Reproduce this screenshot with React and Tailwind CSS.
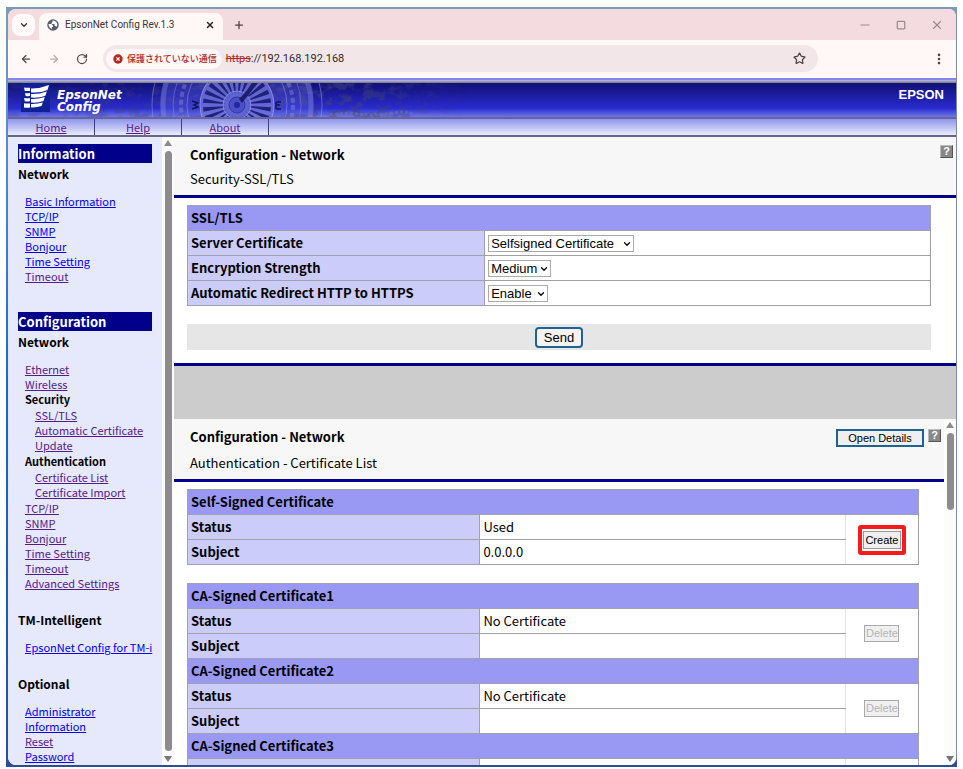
import { ArrowLeft, ArrowRight, ChevronDown, EllipsisVertical, Minus, Plus, RotateCw, Square, Star, X } from 'lucide-react';

const informationLinks = [
  { label: 'Basic Information' },
  { label: 'TCP/IP' },
  { label: 'SNMP' },
  { label: 'Bonjour' },
  { label: 'Time Setting' },
  { label: 'Timeout', visited: true },
];

const configurationLinks = [
  { label: 'Ethernet', visited: true },
  { label: 'Wireless', visited: true },
  {
    label: 'Security',
    children: [
      { label: 'SSL/TLS', visited: true },
      { label: 'Automatic Certificate Update', visited: true },
    ],
  },
  {
    label: 'Authentication',
    children: [
      { label: 'Certificate List', visited: true },
      { label: 'Certificate Import', visited: true },
    ],
  },
  { label: 'TCP/IP', visited: true },
  { label: 'SNMP', visited: true },
  { label: 'Bonjour', visited: true },
  { label: 'Time Setting', visited: true },
  { label: 'Timeout', visited: true },
  { label: 'Advanced Settings', visited: true },
];

const intelligentLinks = [{ label: 'EpsonNet Config for TM-i', nowrap: true }];

const optionalLinks = [
  { label: 'Administrator Information' },
  { label: 'Reset', visited: true },
  { label: 'Password' },
];

const sslSettings = [
  { id: 'server-certificate', label: 'Server Certificate', value: 'Selfsigned Certificate', width: 'w-[146px]' },
  { id: 'encryption-strength', label: 'Encryption Strength', value: 'Medium', width: 'w-[63px]' },
  { id: 'https-redirect', label: 'Automatic Redirect HTTP to HTTPS', value: 'Enable', width: 'w-[60px]' },
];

const caCertificates = ['CA-Signed Certificate1', 'CA-Signed Certificate2', 'CA-Signed Certificate3'];

// === Browser chrome ===
const GlobeIcon = () => (
  <svg className="size-3 shrink-0" viewBox="0 0 24 24">
    <circle cx="12" cy="12" r="11.5" fill="#566069" />
    <path d="M3 10h6l3 3v3h-2v4C6 19 3 15 3 10z" fill="#fff8f6" />
    <path d="M11 3v3l-2 2v2h6v3l3 2h2c2-5 0-11-9-12z" fill="#fff8f6" />
  </svg>
);

const TabStrip = () => (
  <div className="flex h-[31px] shrink-0 items-end bg-[#f4dbdf] pl-1">
    <button className="mb-1 flex h-[22px] w-[23px] items-center justify-center rounded-lg bg-[#fffafa]" aria-label="Search tabs">
      <ChevronDown size={10} strokeWidth={3} color="#333" />
    </button>
    <div className="ml-1 flex h-[27px] w-[184px] items-center rounded-t-lg bg-[#fff8f6] pb-1 pl-2 pr-2">
      <GlobeIcon />
      <span className="ml-1.5 flex-1 whitespace-nowrap font-['Roboto',sans-serif] text-[10px] text-[#3c3436]">EpsonNet Config Rev.1.3</span>
      <button aria-label="Close tab"><X size={10} strokeWidth={3.5} color="#2b2325" /></button>
    </div>
    <button className="mb-[9px] ml-2.5" aria-label="New tab"><Plus size={12} strokeWidth={2.5} color="#4a4042" /></button>
    <div className="mb-2 ml-auto flex gap-[22px] pr-3 text-[#9c8b8e]">
      <button aria-label="Minimize"><Minus size={14} strokeWidth={2} /></button>
      <button aria-label="Maximize"><Square size={10} strokeWidth={3} className="mx-0.5" /></button>
      <button aria-label="Close"><X size={14} strokeWidth={2} /></button>
    </div>
  </div>
);

const Toolbar = () => (
  <div className="flex h-[37px] shrink-0 items-center bg-[#fff8f6] pl-3 pr-2.5">
    <button aria-label="Back"><ArrowLeft size={12} strokeWidth={2.5} color="#544446" /></button>
    <button className="ml-4" aria-label="Forward"><ArrowRight size={12} strokeWidth={2.5} color="#b5a9aa" /></button>
    <button className="ml-4" aria-label="Reload"><RotateCw size={12} strokeWidth={2.5} color="#544446" /></button>
    <div className="ml-[15px] flex h-[27px] flex-1 items-center rounded-full bg-[#f2e6e9] pl-[3px] pr-3">
      <button className="flex h-[20px] items-center gap-1 rounded-full bg-[#fff8f6] pl-[7px] pr-[5px]">
        <svg className="size-[10px]" viewBox="0 0 10 10">
          <circle cx="5" cy="5" r="4.7" fill="#b3261e" />
          <path d="M3.4 3.4l3.2 3.2M6.6 3.4L3.4 6.6" stroke="#fff" strokeWidth="1.3" />
        </svg>
        <span className="whitespace-nowrap text-[9px] font-medium leading-[20px] text-[#b3261e]">保護されていない通信</span>
      </button>
      <span className="ml-1 flex-1 font-['Roboto',sans-serif] text-[11px] leading-[20px] text-[#33292b]">
        <span className="text-[#b3261e] line-through">https</span>://192.168.192.168
      </span>
      <button aria-label="Bookmark"><Star size={13} strokeWidth={2.3} color="#544446" /></button>
    </div>
    <button className="ml-[114px]" aria-label="Menu"><EllipsisVertical size={14} strokeWidth={2.5} color="#544446" /></button>
  </div>
);

// === Printer banner ===
const CompassArt = () => (
  <svg className="absolute inset-y-0 left-0 h-full w-[460px]" viewBox="0 0 460 34" preserveAspectRatio="xMinYMin slice">
    <defs>
      <linearGradient id="mapFade" x1="0" x2="1">
        <stop offset="0.1" stopColor="#fff" stopOpacity="0.4" />
        <stop offset="0.75" stopColor="#fff" />
        <stop offset="1" stopColor="#fff" stopOpacity="0" />
      </linearGradient>
      <mask id="mapMask"><rect width="460" height="34" fill="url(#mapFade)" /></mask>
      <filter id="terrain" x="0" y="0" width="1" height="1">
        <feTurbulence type="fractalNoise" baseFrequency="0.09 0.13" numOctaves="4" seed="8" />
        <feColorMatrix values="0 0 0 0 0.05  0 0 0 0 0.05  0 0 0 0 0.22  5 0 0 0 -2.3" />
      </filter>
    </defs>
    <g mask="url(#mapMask)" opacity="0.6">
      <rect width="460" height="34" filter="url(#terrain)" />
    </g>
    <path d="M322 32q16-3 29-1t33-1 20 2" fill="none" stroke="#77758a" strokeWidth="3" strokeDasharray="3 2" opacity="0.5" />
    <circle cx="229" cy="22" r="77" fill="#5c62d8" opacity="0.35" />
    <g fill="none" stroke="#9a9eea">
      <circle cx="229" cy="22" r="85" strokeWidth="1" opacity="0.5" />
      <circle cx="229" cy="22" r="74" strokeWidth="5" opacity="0.3" />
      <circle cx="229" cy="22" r="64" opacity="0.4" />
      <circle cx="229" cy="22" r="56" strokeWidth="4" strokeDasharray="5 3" opacity="0.35" />
      <circle cx="229" cy="22" r="50" opacity="0.5" />
    </g>
    <circle cx="229" cy="22" r="37" fill="#7075dc" stroke="#a2a6ee" opacity="0.75" />
    <g fill="#14166a" opacity="0.85">
      {Array.from({ length: 24 }, (_, i) => (
        <path key={i} d="M228.6 11l-1.6-23h4.4l-2 23z" transform={`rotate(${i * 15 + 7} 229 22)`} />
      ))}
    </g>
    <circle cx="229" cy="22" r="14" fill="#6065d0" stroke="#8f94e6" opacity="0.8" />
    <circle cx="229" cy="22" r="8" fill="#4a4fc6" stroke="#3338a6" />
    <circle cx="229" cy="22" r="3" fill="#2226a0" />
    <path d="M231 16l15-16h4l-16 20z" fill="#1c1e72" />
    <path d="M184 18l6 2-4 2 4 2-6 2M268 19v7M268 19h5M268 22h4M268 26h5" fill="none" stroke="#12145e" strokeWidth="1.4" />
  </svg>
);

const Banner = () => (
  <header className="shrink-0">
    <div className="h-px bg-[#fff8f6]" />
    <div className="h-[2px] bg-[#8484f2]" />
    <div className="h-[3px] bg-linear-to-b from-[#c0c0d4] to-[#77779a]" />
    <div className="relative flex h-[34px] items-start justify-between overflow-hidden bg-linear-to-b from-[#101074] via-[#2b2bd2] via-75% to-[#7474e4]">
      <CompassArt />
      <div className="relative flex items-start">
        <svg className="ml-[13px] h-[29px] w-[29px]" viewBox="0 0 29 29">
          <rect width="29" height="29" fill="#102096" />
          <g fill="#fff">
            <path d="M3 4.5q3 .6 6 .2v3.2q-3 .4-5.200 0zM10 5.500q9 .2 18-3.500l-1.500 5q-7 3.200-16.500 2.400z" />
            <path d="M4 9.900q2.500.500 5 .200v3q-2.500.3-4.300 0zM10 11q8 .3 15.800-2.600l-1.400 4.400q-6.400 2.500-14.400 1.800z" />
            <path d="M3 15q3 .5 6 .2v3q-3 .4-5.200 0zM10 16q7 .3 13.800-2l-1.300 4q-5.500 2.200-12.500 1.600z" />
            <path d="M3 20.300q3 .5 6 .2v4q-3 .4-6 0zM10 21q6 .2 11.800-1.400l-1.200 3.400q-4.600 1.700-10.600 1.400z" />
          </g>
        </svg>
        <div className="ml-[7px] pt-[6px] font-['DejaVu_Sans',sans-serif] text-[12px] font-bold italic leading-[12px] text-white">
          EpsonNet<br />Config
        </div>
      </div>
      <span className="relative pr-3 pt-[3px] font-['Liberation_Sans',sans-serif] text-[13px] font-bold leading-[18px] text-white">EPSON</span>
    </div>
    <nav className="flex h-[20px] border-b-2 border-t-2 border-b-[#66668c] border-t-[#65659a] bg-linear-to-b from-[#9094ea] to-[#ececfb]">
      {['Home', 'Help', 'About'].map(item => (
        <a key={item} href="#" className="w-[87px] border-r border-[#40407c] text-center text-[11px] leading-[17px] text-[#551a8b] underline">
          {item}
        </a>
      ))}
    </nav>
  </header>
);

// === Frames ===
const ScrollBar = ({ short }) => (
  <div className="flex w-[12px] shrink-0 flex-col items-center bg-[#fcfcfc] pb-[3px] pt-[3px]">
    <svg className="h-[6px] w-[8px] shrink-0" viewBox="0 0 8 6"><path d="M4 0l4 6H0z" fill="#8c8c8c" /></svg>
    <div className={`my-[5px] w-[7px] rounded-full bg-[#8c8c8c] ${short ? 'h-[77px]' : 'flex-1'}`} />
    <svg className="mt-auto h-[6px] w-[8px] shrink-0" viewBox="0 0 8 6"><path d="M4 6L0 0h8z" fill="#777" /></svg>
  </div>
);

const LinkList = ({ items, nested }) => (
  <ul className={nested ? 'py-px pl-2.5' : 'mt-2.5 pl-[7px]'}>
    {items.map(item => (
      <li key={item.label} className={item.nowrap ? 'whitespace-nowrap' : undefined}>
        {item.children ? (
          <>
            <span className="font-bold">{item.label}</span>
            <LinkList items={item.children} nested />
          </>
        ) : (
          <a href="#" className={`underline ${item.visited ? 'text-[#551a8b]' : 'text-[#0000ee]'}`}>{item.label}</a>
        )}
      </li>
    ))}
  </ul>
);

const MenuTitle = ({ children }) => (
  <h2 className="mb-px bg-[#00008b] text-[13px] font-bold leading-[19px] text-white">{children}</h2>
);

const MenuHeading = ({ children }) => <h3 className="text-[12px] font-bold leading-[20px]">{children}</h3>;

const Sidebar = () => (
  <aside className="flex w-[166px] shrink-0 overflow-hidden">
    <div className="h-full flex-1 overflow-hidden bg-[#e6e8fb] pl-2.5 pr-2.5 pt-[7px] text-[11px] leading-[15px]">
      <MenuTitle>Information</MenuTitle>
      <MenuHeading>Network</MenuHeading>
      <LinkList items={informationLinks} />
      <div className="h-7" />
      <MenuTitle>Configuration</MenuTitle>
      <MenuHeading>Network</MenuHeading>
      <LinkList items={configurationLinks} />
      <div className="h-[19px]" />
      <MenuHeading>TM-Intelligent</MenuHeading>
      <LinkList items={intelligentLinks} />
      <div className="h-[19px]" />
      <MenuHeading>Optional</MenuHeading>
      <LinkList items={optionalLinks} />
    </div>
    <ScrollBar />
  </aside>
);

const HelpButton = () => (
  <button aria-label="Help" className="flex size-[13px] items-center justify-center border border-b-[#555] border-l-[#bbb] border-r-[#555] border-t-[#bbb] bg-[#888] font-['Liberation_Sans',sans-serif] text-[11px] font-bold leading-[11px] text-white">
    ?
  </button>
);

const SectionRow = ({ children, span }) => (
  <tr className="h-[25px] bg-[#9999f3]">
    <th colSpan={span} className="border border-[#a0a0b0] pl-[3px] text-left">{children}</th>
  </tr>
);

const LabelCell = ({ children }) => (
  <th scope="row" className="border border-[#a0a0b0] bg-[#ccccfa] pl-[3px] text-left">{children}</th>
);

const SslFrame = () => (
  <section className="shrink-0 bg-white">
    <div className="flex items-start justify-between border-b-[3px] border-[#00008b] bg-[#f7f7f7] pb-1.5 pl-4 pr-[3px] pt-2">
      <div>
        <h1 className="font-bold">Configuration - Network</h1>
        <p className="mt-1">Security-SSL/TLS</p>
      </div>
      <HelpButton />
    </div>
    <form className="pb-[13px] pl-[13px] pr-[25px] pt-[7px]" onSubmit={e => e.preventDefault()}>
      <table className="w-full table-fixed border-collapse">
        <colgroup>
          <col className="w-[40%]" />
          <col />
        </colgroup>
        <tbody>
          <SectionRow span={2}>SSL/TLS</SectionRow>
          {sslSettings.map(row => (
            <tr key={row.id} className="h-[25px]">
              <LabelCell><label htmlFor={row.id}>{row.label}</label></LabelCell>
              <td className="border border-[#a0a0a0] pl-[3px]">
                <div className={`relative ${row.width}`}>
                  <select id={row.id} className="block h-[17px] w-full appearance-none border border-[#aaa] bg-white pl-[2px] font-['Liberation_Sans',sans-serif] text-[13px] leading-[15px]">
                    <option>{row.value}</option>
                  </select>
                  <ChevronDown size={10} strokeWidth={3} className="pointer-events-none absolute right-[2px] top-1" />
                </div>
              </td>
            </tr>
          ))}
        </tbody>
      </table>
      <div className="mt-[18px] flex h-[26px] items-center justify-center bg-[#e6e6e6]">
        <button className="h-[21px] w-[48px] rounded-[4px] border-2 border-[#1f6293] bg-[#f3f3f3] font-['Liberation_Sans',sans-serif] text-[13px] leading-[17px]">Send</button>
      </div>
    </form>
    <div className="h-[3px] bg-[#00008b]" />
  </section>
);

const ListRows = ({ title, status, subject, children }) => (
  <>
    <SectionRow span={3}>{title}</SectionRow>
    <tr className="h-[25px]">
      <LabelCell>Status</LabelCell>
      <td className="border border-r-[#e4e4e4] border-[#a0a0a0] pl-[3px]">{status}</td>
      <td rowSpan={2} className="border border-[#a0a0a0] border-l-[#e4e4e4]">
        <div className="flex justify-center">{children}</div>
      </td>
    </tr>
    <tr className="h-[25px]">
      <LabelCell>Subject</LabelCell>
      <td className="border border-r-[#e4e4e4] border-[#a0a0a0] pl-[3px]">{subject}</td>
    </tr>
  </>
);

const ListColumns = () => (
  <colgroup>
    <col className="w-[40%]" />
    <col className="w-[50%]" />
    <col />
  </colgroup>
);

const CertificateFrame = () => (
  <section className="flex min-h-0 flex-1 overflow-hidden bg-white">
    <div className="min-w-0 flex-1 overflow-hidden">
      <div className="flex items-start justify-between border-b-[3px] border-[#00008b] bg-[#f7f7f7] pb-1.5 pl-4 pr-[3px] pt-2">
        <div>
          <h1 className="font-bold">Configuration - Network</h1>
          <p className="mt-1.5">Authentication - Certificate List</p>
        </div>
        <div className="flex items-start gap-1 pt-0.5">
          <button className="h-[18px] w-[88px] border-2 border-[#1f6293] bg-[#efefef] font-['Liberation_Sans',sans-serif] text-[11px] leading-[14px]">Open Details</button>
          <HelpButton />
        </div>
      </div>
      <div className="pl-[13px] pr-[25px] pt-[7px]">
        <table className="w-full table-fixed border-collapse">
          <ListColumns />
          <tbody>
            <ListRows title="Self-Signed Certificate" status="Used" subject="0.0.0.0">
              <div className="rounded-[3px] border-4 border-[#fb1a1a] px-px py-[2px]">
                <button className="block h-[18px] w-[38px] border border-[#999] bg-[#efefef] font-['Liberation_Sans',sans-serif] text-[11px] leading-[16px]">Create</button>
              </div>
            </ListRows>
          </tbody>
        </table>
        <table className="mt-[18px] w-full table-fixed border-collapse">
          <ListColumns />
          <tbody>
            {caCertificates.map(title => (
              <ListRows key={title} title={title} status="No Certificate">
                <button disabled className="h-[17px] w-[35px] border border-[#aaa] bg-[#f0f0f0] font-['Liberation_Sans',sans-serif] text-[11px] leading-[15px] text-[#b4b4b4]">Delete</button>
              </ListRows>
            ))}
          </tbody>
        </table>
      </div>
    </div>
    <ScrollBar short />
  </section>
);

const App = () => (
  <div className="h-screen bg-white px-1.5 pb-0.5 pt-[7px] font-['Noto_Sans_CJK_JP',sans-serif] text-black">
    <div className="h-full bg-linear-to-b from-[#7a9cb8] via-[#1565d8] via-50% to-[#2b4f92] pb-[2px] pl-[2px] pt-[2px]">
      <div className="flex h-full flex-col overflow-hidden rounded-lg border-r border-[#7d8ba0] bg-white">
        <TabStrip />
        <Toolbar />
        <Banner />
        <div className="flex min-h-0 flex-1">
          <Sidebar />
          <main className="flex min-w-0 flex-1 flex-col text-[13px] leading-[20px]">
            <SslFrame />
            <div className="h-[53px] shrink-0 bg-[#ccc]" />
            <CertificateFrame />
          </main>
        </div>
      </div>
    </div>
  </div>
);

export default App;
